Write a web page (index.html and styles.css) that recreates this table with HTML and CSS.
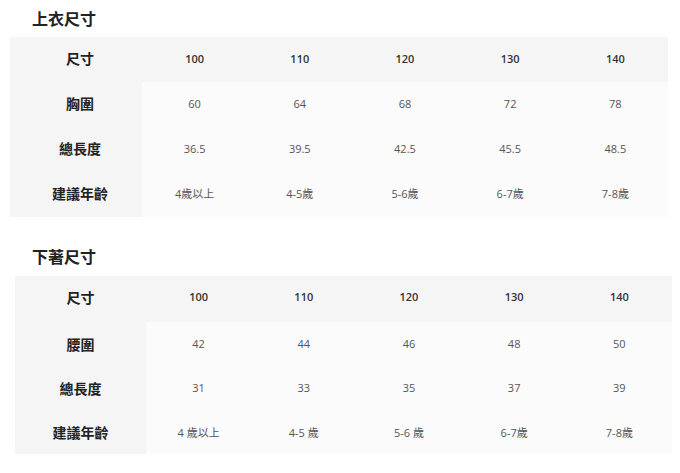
FILE: index.html
```html
<!DOCTYPE html>
<html lang="zh-Hant">
<head>
<meta charset="utf-8">
<link rel="stylesheet" href="styles.css">
</head>
<body>
<section class="block block-top">
  <h2 class="title">上衣尺寸</h2>
  <table class="size-table t1">
    <tr class="head"><th class="label">尺寸</th><th>100</th><th>110</th><th>120</th><th>130</th><th>140</th></tr>
    <tr><th class="label">胸圍</th><td>60</td><td>64</td><td>68</td><td>72</td><td>78</td></tr>
    <tr><th class="label">總長度</th><td>36.5</td><td>39.5</td><td>42.5</td><td>45.5</td><td>48.5</td></tr>
    <tr><th class="label">建議年齡</th><td>4歲以上</td><td>4-5歲</td><td>5-6歲</td><td>6-7歲</td><td>7-8歲</td></tr>
  </table>
</section>
<section class="block block-bottom">
  <h2 class="title">下著尺寸</h2>
  <table class="size-table t2">
    <tr class="head"><th class="label">尺寸</th><th>100</th><th>110</th><th>120</th><th>130</th><th>140</th></tr>
    <tr><th class="label">腰圍</th><td>42</td><td>44</td><td>46</td><td>48</td><td>50</td></tr>
    <tr><th class="label">總長度</th><td>31</td><td>33</td><td>35</td><td>37</td><td>39</td></tr>
    <tr><th class="label">建議年齡</th><td>4 歲以上</td><td>4-5 歲</td><td>5-6 歲</td><td>6-7歲</td><td>7-8歲</td></tr>
  </table>
</section>
</body>
</html>
```

FILE: styles.css
```css
html, body {
  margin: 0;
  padding: 0;
  background: #ffffff;
}
body {
  font-family: "Open Sans", "Noto Sans CJK TC", sans-serif;
  color: #333;
}
.block-top {
  padding: 8px 12px 0 10px;
}
.block-bottom {
  padding: 29px 8px 0 15px;
}
.title {
  margin: 0 0 9px 22px;
  font-family: "Noto Sans CJK TC", sans-serif;
  font-size: 16px;
  line-height: 20px;
  font-weight: 700;
  color: #222;
}
.block-top .title { margin-left: 22px; }
.block-bottom .title { margin-left: 17px; margin-bottom: 10px; }
.size-table {
  width: 100%;
  border-collapse: collapse;
  table-layout: fixed;
}
.size-table th, .size-table td {
  padding: 0;
  text-align: center;
  vertical-align: middle;
  font-size: 11px;
  background: #fbfbfb;
  color: #555;
}
.t1 th, .t1 td { padding-bottom: 3px; }
.t2 td, .t2 th.label { padding-bottom: 1px; }
.t2 .head th, .t2 .head th.label { padding-bottom: 5px; }
.size-table .head th {
  background: #f5f5f5;
  font-weight: 600;
  color: #333;
}
.size-table th.label {
  width: 132px;
  background: #f5f5f5;
  font-family: "Noto Sans CJK TC", sans-serif;
  font-size: 14px;
  font-weight: 700;
  color: #222;
}
.t1 th.label { padding-left: 8px; width: 124px; }
.t1 tr { height: 45px; }
.t2 th.label { width: 131px; }
.t2 tr { height: 44px; }
.t2 tr.head { height: 46px; }
.size-table td {
  font-weight: 400;
}
```
